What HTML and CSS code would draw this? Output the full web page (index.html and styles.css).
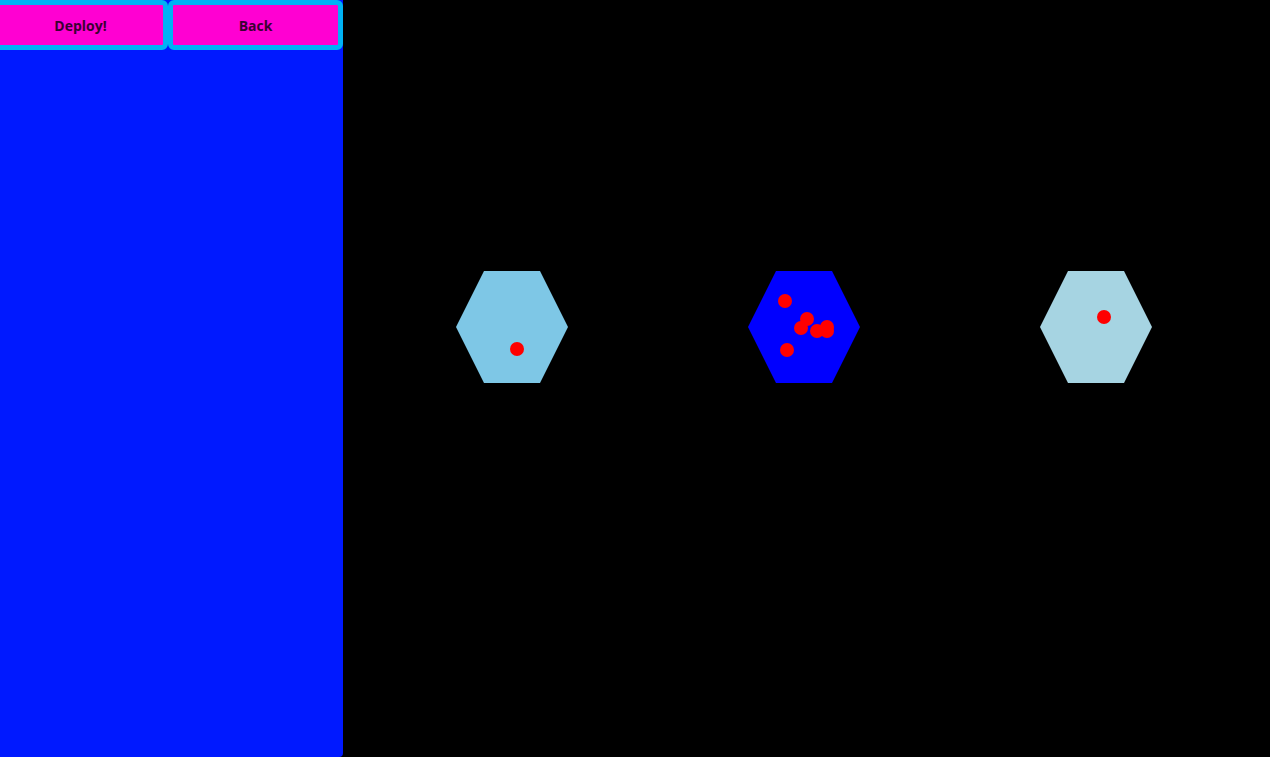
FILE: index.html
```html
<!DOCTYPE html>
<html>
<head>
<meta charset="utf-8">
<link rel="stylesheet" href="styles.css">
</head>
<body>
<div class="app">
  <aside class="sidebar">
    <div class="actions">
      <button class="btn">Deploy!</button>
      <button class="btn">Back</button>
    </div>
  </aside>
  <main class="board">
    <div class="hex hex-sky">
      <span class="unit" style="left:54px;top:71px"></span>
    </div>
    <div class="hex hex-blue">
      <span class="unit" style="left:30px;top:23px"></span>
      <span class="unit" style="left:52px;top:41px"></span>
      <span class="unit" style="left:46px;top:50px"></span>
      <span class="unit" style="left:62px;top:53px"></span>
      <span class="unit" style="left:72px;top:49px"></span>
      <span class="unit" style="left:72px;top:53px"></span>
      <span class="unit" style="left:32px;top:72px"></span>
    </div>
    <div class="hex hex-light">
      <span class="unit" style="left:57px;top:39px"></span>
    </div>
  </main>
</div>
</body>
</html>
```

FILE: styles.css
```css
html, body {
  margin: 0;
  padding: 0;
  background: #ffffff;
}

.app {
  display: flex;
  height: 757px;
  width: 1270px;
  overflow: hidden;
  background: #000000;
}

.sidebar {
  flex: 0 0 350px;
  margin-left: -7px;
  background: #0019ff;
  border-bottom-right-radius: 4px;
}

.actions {
  display: flex;
}

.btn {
  flex: 0 0 175px;
  height: 50px;
  box-sizing: border-box;
  border: 5px solid #00b2f5;
  border-radius: 6px;
  background: #ff00d2;
  color: #3a0032;
  font-family: "Open Sans", "DejaVu Sans", sans-serif;
  font-weight: 700;
  font-size: 14px;
  padding: 0;
  cursor: pointer;
}

.board {
  flex: 1;
  display: flex;
  align-items: flex-start;
  gap: 180px;
  padding: 271px 0 0 113px;
  background: #000000;
}

.hex {
  position: relative;
  flex: 0 0 112px;
  height: 112px;
  clip-path: polygon(25% 0, 75% 0, 100% 50%, 75% 100%, 25% 100%, 0 50%);
}

.hex-sky { background: #7ec7e6; }
.hex-blue { background: #0000ff; }
.hex-light { background: #a6d4e2; }

.unit {
  position: absolute;
  width: 14px;
  height: 14px;
  border-radius: 50%;
  background: #ff0000;
}
```
